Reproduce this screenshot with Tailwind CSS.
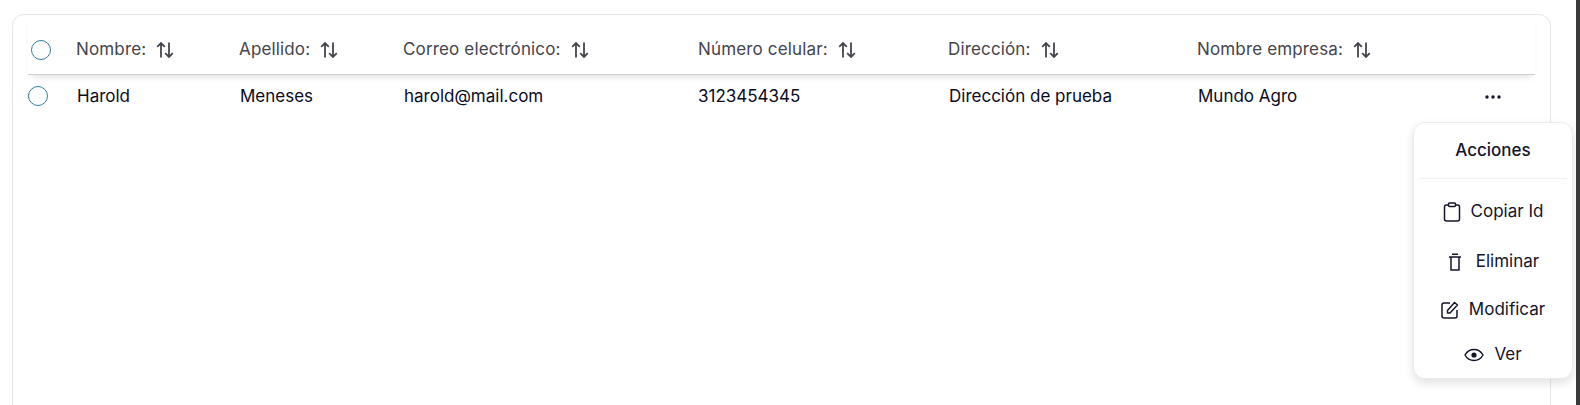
<!DOCTYPE html>
<html lang="es">
<head>
    <meta charset="UTF-8">
    <title>Usuarios</title>
    <script src="https://cdn.jsdelivr.net/npm/@tailwindcss/browser@4"></script>
</head>
<body class="relative h-[405px] w-[1580px] overflow-hidden bg-white font-['Inter',sans-serif] text-[17px]">
    <div class="flex h-full">
        <div class="h-full flex-1 overflow-hidden pl-3 pt-[14px] pr-[25px]">
            <!-- Table card -->
            <div class="h-[420px] rounded-[12px] border border-[#e5e5e5] px-[15px]">
                <!-- Header -->
                <div class="grid h-[60px] grid-cols-[48px_163px_164px_295px_250px_249px_1fr] items-center border-b border-[#cfcfcf] pt-[10px] tracking-[0.15px] text-[#44444c] shadow-[0_5px_6px_-3px_rgba(0,0,0,0.12)]">
                    <span class="ml-[3px] size-[20px] rounded-full border-[1.5px] border-[#2f7f9f]"></span>
                    <div class="flex items-center gap-[9px]">Nombre:
                        <svg class="size-[20px]" viewBox="0 0 20 20" fill="none" stroke="#44444c" stroke-width="1.8"><path d="M6 17.500V3M2.200 6.800 6 3 9.800 6.800M14 2.500V17M10.200 13.200 14 17l3.800-3.800"/></svg>
                    </div>
                    <div class="flex items-center gap-[9px]">Apellido:
                        <svg class="size-[20px]" viewBox="0 0 20 20" fill="none" stroke="#44444c" stroke-width="1.8"><path d="M6 17.500V3M2.200 6.800 6 3 9.800 6.800M14 2.500V17M10.200 13.200 14 17l3.800-3.800"/></svg>
                    </div>
                    <div class="flex items-center gap-[9px]">Correo electrónico:
                        <svg class="size-[20px]" viewBox="0 0 20 20" fill="none" stroke="#44444c" stroke-width="1.8"><path d="M6 17.500V3M2.200 6.800 6 3 9.800 6.800M14 2.500V17M10.200 13.200 14 17l3.800-3.800"/></svg>
                    </div>
                    <div class="flex items-center gap-[9px]">Número celular:
                        <svg class="size-[20px]" viewBox="0 0 20 20" fill="none" stroke="#44444c" stroke-width="1.8"><path d="M6 17.500V3M2.200 6.800 6 3 9.800 6.800M14 2.500V17M10.200 13.200 14 17l3.800-3.800"/></svg>
                    </div>
                    <div class="flex items-center gap-[9px]">Dirección:
                        <svg class="size-[20px]" viewBox="0 0 20 20" fill="none" stroke="#44444c" stroke-width="1.8"><path d="M6 17.500V3M2.200 6.800 6 3 9.800 6.800M14 2.500V17M10.200 13.200 14 17l3.800-3.800"/></svg>
                    </div>
                    <div class="flex items-center gap-[9px]">Nombre empresa:
                        <svg class="size-[20px]" viewBox="0 0 20 20" fill="none" stroke="#44444c" stroke-width="1.8"><path d="M6 17.500V3M2.200 6.800 6 3 9.800 6.800M14 2.500V17M10.200 13.200 14 17l3.800-3.800"/></svg>
                    </div>
                </div>
                <!-- Row -->
                <div class="grid h-[44px] grid-cols-[49px_163px_164px_294px_251px_249px_1fr] items-center text-[#0a0a23]">
                    <span class="-mt-[2px] size-[20px] rounded-full border-[1.5px] border-[#2f7f9f]"></span>
                    <span>Harold</span>
                    <span>Meneses</span>
                    <span>harold@mail.com</span>
                    <span>3123454345</span>
                    <span>Dirección de prueba</span>
                    <span>Mundo Agro</span>
                    <svg class="absolute left-[1484px] top-[93px] h-[8px] w-[18px]" viewBox="0 0 18 8" fill="#14142b"><circle cx="3" cy="4" r="1.700"/><circle cx="9" cy="4" r="1.700"/><circle cx="15" cy="4" r="1.700"/></svg>
                </div>
            </div>
        </div>
        <div class="w-1 bg-[#3a3a3a]"></div>
    </div>

    <!-- Actions menu -->
    <div class="absolute left-[1413px] top-[122px] flex h-[257px] w-[160px] flex-col rounded-[12px] border border-[#ececec] bg-white px-[5px] text-[#14142b] shadow-[0_4px_10px_rgba(0,0,0,0.12)]">
        <div class="flex h-[56px] items-center justify-center border-b border-[#f0f0f0] font-medium">Acciones</div>
        <div class="mt-[10px] flex h-[46px] items-center justify-center gap-[10px]">
            <svg class="h-[20px] w-[18px]" viewBox="0 0 18 20" fill="none" stroke="#14142b" stroke-width="1.500" stroke-linejoin="round"><rect x="1.500" y="3" width="15" height="16" rx="2"/><rect x="5.500" y="1" width="7" height="3.500" rx="1" fill="#fff"/></svg>
            Copiar Id
        </div>
        <div class="mt-[4px] flex h-[46px] items-center justify-center gap-[14px] pl-px">
            <svg class="h-[18px] w-[14px]" viewBox="0 0 14 18" fill="none" stroke="#14142b" stroke-width="1.500"><path d="M1 4h12M4 1.200h6M3 4v13h8V4"/></svg>
            Eliminar
        </div>
        <div class="mt-[2px] flex h-[46px] items-center justify-center gap-[10px]">
            <svg class="size-[18px]" viewBox="0 0 18 18" fill="none" stroke="#14142b" stroke-width="1.500" stroke-linejoin="round"><path d="M9 2H3a2 2 0 0 0-2 2v11a2 2 0 0 0 2 2h11a2 2 0 0 0 2-2V9"/><path d="M6.500 9.500 13.500 1.500 16.500 4 9 12H6.500z"/></svg>
            Modificar
        </div>
        <div class="-mt-px flex h-[46px] items-center justify-center gap-[10px]">
            <svg class="h-[14px] w-[20px]" viewBox="0 0 20 14" fill="none" stroke="#14142b" stroke-width="1.400"><path d="M1 7c2-3.600 5-5.500 9-5.500S17 3.400 19 7c-2 3.600-5 5.500-9 5.500S3 10.600 1 7z"/><circle cx="10" cy="7" r="2.600" fill="#14142b" stroke="none"/></svg>
            Ver
        </div>
    </div>
</body>
</html>
